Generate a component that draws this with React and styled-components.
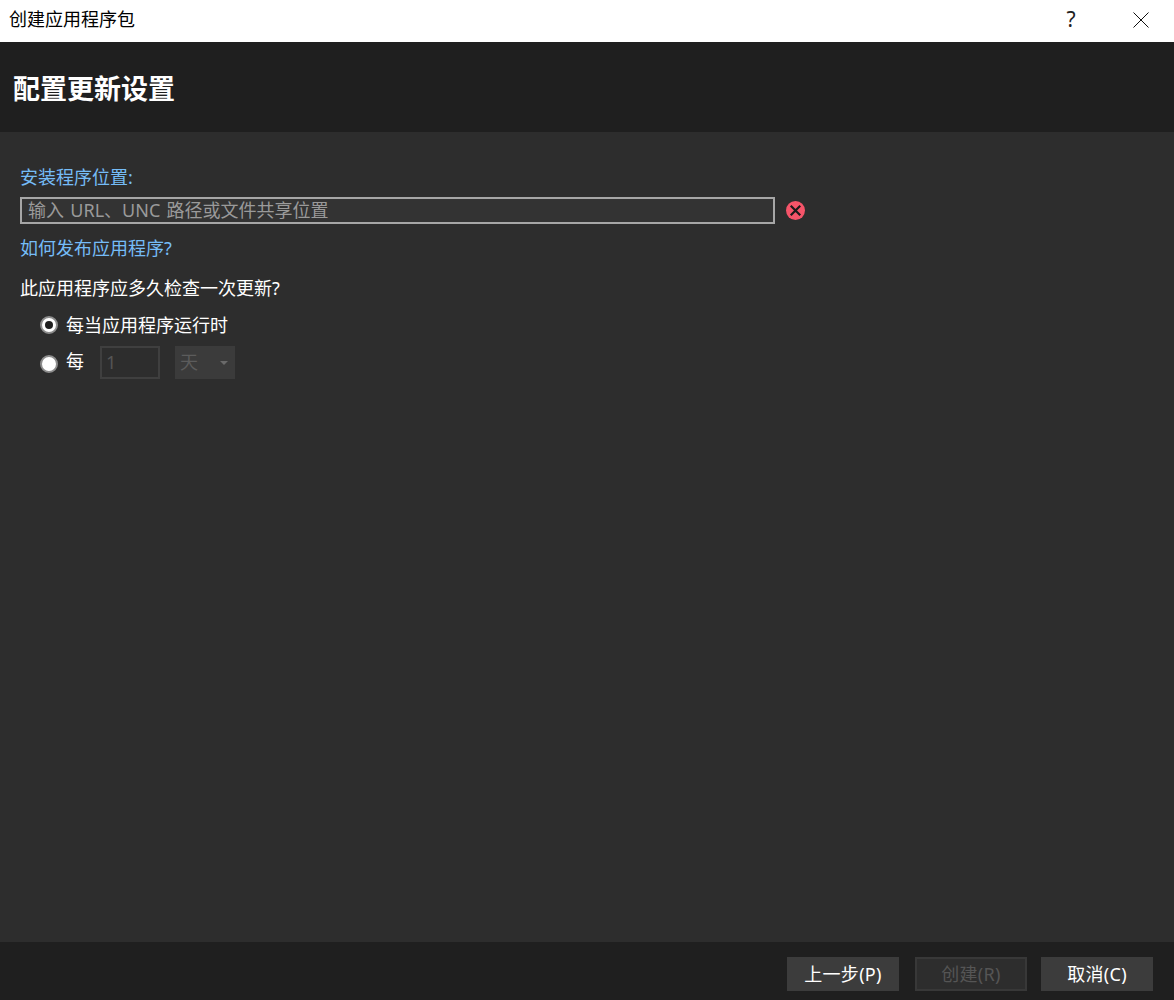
import React from "react";
import styled, { createGlobalStyle } from "styled-components";

const GlobalStyle = createGlobalStyle`
  html, body {
    margin: 0;
    padding: 0;
    background: #2d2d2d;
  }
  body {
    font-family: "Noto Sans", "Noto Sans CJK SC", sans-serif;
    font-size: 18px;
  }
  * {
    box-sizing: border-box;
  }
`;

const Window = styled.div`
  width: 1174px;
  height: 1000px;
  display: flex;
  flex-direction: column;
  overflow: hidden;
`;

const TitleBar = styled.div`
  height: 42px;
  background: #ffffff;
  display: flex;
  align-items: center;
  padding-left: 9px;
  color: #000000;
`;

const TitleText = styled.span`
  flex: 1;
  line-height: 38px;
  height: 42px;
`;

const HelpMark = styled.span`
  width: 70px;
  height: 42px;
  padding-right: 4px;
  text-align: center;
  font-size: 21px;
  color: #222222;
  line-height: 38px;
`;

const CloseButton = styled.button`
  width: 66px;
  height: 42px;
  border: none;
  background: transparent;
  padding: 0 0 2px;
  display: flex;
  align-items: center;
  justify-content: center;
  svg {
    display: block;
  }
`;

const Header = styled.div`
  height: 90px;
  background: #1f1f1f;
  display: flex;
  align-items: center;
  padding: 4px 0 0 13px;
`;

const Heading = styled.h1`
  margin: 0;
  font-size: 27px;
  font-weight: 700;
  line-height: 36px;
  color: #ffffff;
`;

const Content = styled.div`
  flex: 1;
  background: #2d2d2d;
  padding: 32px 0 0 20px;
  display: flex;
  flex-direction: column;
`;

const FieldLabel = styled.div`
  color: #75bcf7;
  line-height: 26px;
  margin-bottom: 7px;
`;

const LocationRow = styled.div`
  display: flex;
  align-items: center;
  gap: 11px;
`;

const LocationInput = styled.div`
  width: 755px;
  height: 27px;
  border: 2px solid #a6a6a6;
  background: #333333;
  color: #9a9a9a;
  line-height: 22px;
  padding-left: 6px;
  white-space: nowrap;
  word-spacing: 1.6px;
`;

const HelpLink = styled.a`
  color: #75bcf7;
  line-height: 26px;
  margin-top: 11px;
`;

const Question = styled.div`
  color: #ffffff;
  line-height: 26px;
  margin-top: 14px;
`;

const Options = styled.div`
  margin-top: 10px;
  padding-left: 20px;
  display: flex;
  flex-direction: column;
  gap: 9px;
`;

const OptionRow = styled.div`
  display: flex;
  align-items: center;
  height: ${(p) => p.$height}px;
  color: #ffffff;
`;

const OptionText = styled.span`
  line-height: 26px;
  padding-top: ${(p) => p.$drop || 0}px;
  padding-bottom: ${(p) => p.$lift || 0}px;
`;

const Radio = styled.span`
  width: 18px;
  height: 18px;
  margin-top: 2px;
  border-radius: 50%;
  background: #ffffff;
  border: 2px solid #8c8c8c;
  margin-right: 8px;
  display: flex;
  align-items: center;
  justify-content: center;
  &::after {
    content: "";
    display: ${(p) => (p.$checked ? "block" : "none")};
    width: 8px;
    height: 8px;
    border-radius: 50%;
    background: #1f1f1f;
  }
`;

const NumberBox = styled.div`
  width: 60px;
  height: 33px;
  margin-left: 16px;
  border: 2px solid #3f3f3f;
  color: #555555;
  line-height: 28px;
  padding-left: 4px;
`;

const UnitSelect = styled.div`
  width: 60px;
  height: 33px;
  margin-left: 15px;
  background: #3b3b3b;
  color: #5c5c5c;
  display: flex;
  align-items: center;
  justify-content: space-between;
  padding: 0 7px 3px 5px;
`;

const Caret = styled.span`
  width: 0;
  height: 0;
  margin-top: 3px;
  border-left: 4.5px solid transparent;
  border-right: 4.5px solid transparent;
  border-top: 4px solid #6a6a6a;
`;

const Footer = styled.div`
  height: 58px;
  background: #1f1f1f;
  display: flex;
  align-items: flex-start;
  justify-content: flex-end;
  padding: 15px 21px 0 0;
`;

const FooterButton = styled.button`
  width: 112px;
  height: 34px;
  margin-left: ${(p) => p.$gap}px;
  padding: 0;
  font: inherit;
  letter-spacing: 0.3px;
  line-height: 28px;
  color: ${(p) => (p.disabled ? "#555555" : "#ffffff")};
  background: ${(p) => (p.disabled ? "#2d2d2d" : "#3c3c3c")};
  border: 2px solid ${(p) => (p.disabled ? "#383838" : "#3c3c3c")};
`;

const ErrorIcon = () => (
  <svg width="19" height="19" viewBox="0 0 20 20">
    <circle cx="10" cy="10" r="10" fill="#f55469" />
    <path d="M5 5l10 10M15 5L5 15" stroke="#1a1a1a" strokeWidth="2.3" fill="none" />
  </svg>
);

const CloseIcon = () => (
  <svg width="16" height="16" viewBox="0 0 16 16">
    <path d="M.5.5l15 15M15.5.5l-15 15" stroke="#111111" strokeWidth="1" fill="none" />
  </svg>
);

const App = () => (
  <Window>
    <GlobalStyle />
    <TitleBar>
      <TitleText>创建应用程序包</TitleText>
      <HelpMark>?</HelpMark>
      <CloseButton>
        <CloseIcon />
      </CloseButton>
    </TitleBar>
    <Header>
      <Heading>配置更新设置</Heading>
    </Header>
    <Content>
      <FieldLabel>安装程序位置:</FieldLabel>
      <LocationRow>
        <LocationInput>输入 URL、UNC 路径或文件共享位置</LocationInput>
        <ErrorIcon />
      </LocationRow>
      <HelpLink>如何发布应用程序?</HelpLink>
      <Question>此应用程序应多久检查一次更新?</Question>
      <Options>
        <OptionRow $height={26}>
          <Radio $checked />
          <OptionText $drop={2}>每当应用程序运行时</OptionText>
        </OptionRow>
        <OptionRow $height={33}>
          <Radio />
          <OptionText $lift={3}>每</OptionText>
          <NumberBox>1</NumberBox>
          <UnitSelect>
            天
            <Caret />
          </UnitSelect>
        </OptionRow>
      </Options>
    </Content>
    <Footer>
      <FooterButton>上一步(P)</FooterButton>
      <FooterButton $gap={16} disabled>
        创建(R)
      </FooterButton>
      <FooterButton $gap={14}>取消(C)</FooterButton>
    </Footer>
  </Window>
);

export default App;
